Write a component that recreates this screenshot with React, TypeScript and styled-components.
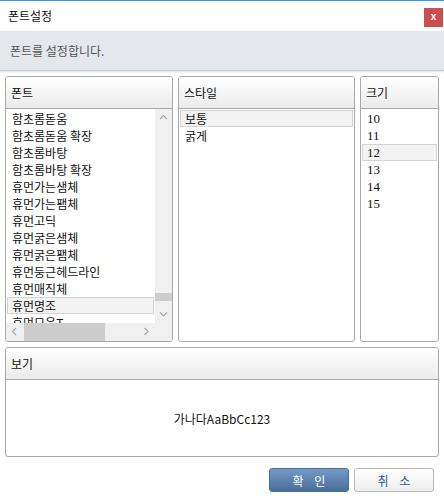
import React from "react";
import styled, { createGlobalStyle } from "styled-components";

const GlobalStyle = createGlobalStyle`
  html, body { margin: 0; padding: 0; background: #fff; }
  body {
    font-family: "Noto Sans CJK KR", "Noto Sans", sans-serif;
    font-size: 12px;
    color: #111;
  }
  * { box-sizing: border-box; }
`;

const Dialog = styled.div`
  width: 444px;
  height: 502px;
  border-top: 1px solid #3c9be8;
  background: #fff;
  display: flex;
  flex-direction: column;
  overflow: hidden;
`;

const TitleBar = styled.div`
  height: 30px;
  display: flex;
  align-items: flex-start;
  justify-content: space-between;
  padding-left: 8px;
`;

const Title = styled.div`
  margin-top: 6px;
  line-height: 18px;
  font-size: 12px;
  color: #111;
`;

const CloseButton = styled.div`
  margin-top: 7px;
  margin-right: 1px;
  width: 19px;
  height: 19px;
  background: #c9504f;
  color: #fff;
  font-family: "Liberation Sans", Arial, sans-serif;
  font-weight: bold;
  font-size: 10px;
  line-height: 18px;
  text-align: center;
`;

const Banner = styled.div`
  height: 40px;
  line-height: 39px;
  background: #e4e7ec;
  border-bottom: 1px solid #c6c8cc;
  box-shadow: 0 1px 2px rgba(0, 0, 0, 0.12);
  padding-left: 10px;
  color: #555;
  font-size: 12px;
`;

const Content = styled.div`
  padding: 5px 5px 0;
  display: flex;
  flex-direction: column;
  gap: 5px;
`;

const TopRow = styled.div`
  display: grid;
  grid-template-columns: 168px 177px 79px;
  gap: 5px;
  height: 266px;
`;

const Panel = styled.div<{ $height?: number }>`
  border: 1px solid #a9a9a9;
  border-radius: 3px;
  background: #fff;
  display: flex;
  flex-direction: column;
  overflow: hidden;
  ${(p) => (p.$height ? `height: ${p.$height}px;` : "")}
`;

const PanelHeader = styled.div`
  height: 32px;
  flex: none;
  border-bottom: 1px solid #a9a9a9;
  background: linear-gradient(#ffffff, #ebebeb);
  padding-left: 5px;
  line-height: 31px;
  font-size: 12px;
  color: #111;
`;

const ScrollFrame = styled.div`
  flex: 1;
  display: grid;
  grid-template-columns: 1fr 17px;
  grid-template-rows: 1fr 18px;
  min-height: 0;
`;

const ListBody = styled.div<{ $serif?: boolean }>`
  flex: 1;
  min-height: 0;
  overflow: hidden;
  padding-top: 1px;
  ${(p) =>
    p.$serif
      ? `font-family: "Liberation Serif", "Noto Sans CJK KR", serif; font-size: 13px;`
      : ""}
`;

const Item = styled.div<{ $selected?: boolean }>`
  height: 17px;
  line-height: 15px;
  margin: 0 1px;
  padding-left: 4px;
  white-space: nowrap;
  border: 1px solid ${(p) => (p.$selected ? "#d3d3d3" : "transparent")};
  background: ${(p) => (p.$selected ? "#f3f3f3" : "transparent")};
`;

const VScroll = styled.div`
  grid-row: 1;
  grid-column: 2;
  background: #f0f0f0;
  display: flex;
  flex-direction: column;
`;

const HScroll = styled.div`
  grid-row: 2;
  grid-column: 1;
  background: #f0f0f0;
  display: flex;
`;

const Corner = styled.div`
  grid-row: 2;
  grid-column: 2;
  background: #f0f0f0;
`;

const ArrowBox = styled.div`
  flex: none;
  width: 17px;
  height: 17px;
  display: flex;
  align-items: center;
  justify-content: center;
`;

const VTrack = styled.div`
  flex: 1;
  display: flex;
  flex-direction: column;
  align-items: center;
`;

const VThumb = styled.div<{ $offset: number }>`
  margin-top: ${(p) => p.$offset}px;
  width: 17px;
  height: 8px;
  background: #cdcdcd;
`;

const HTrack = styled.div`
  flex: 1;
  display: flex;
  align-items: center;
`;

const HThumb = styled.div<{ $offset: number; $width: number }>`
  margin-left: ${(p) => p.$offset}px;
  width: ${(p) => p.$width}px;
  height: 18px;
  background: #cdcdcd;
`;

const PreviewBody = styled.div`
  flex: 1;
  display: flex;
  align-items: center;
  justify-content: center;
  font-size: 12px;
  color: #111;
`;

const Footer = styled.div`
  display: flex;
  justify-content: flex-end;
  gap: 5px;
  padding-right: 10px;
  margin-top: 11px;
`;

const Button = styled.div<{ $primary?: boolean }>`
  width: 80px;
  height: 24px;
  border-radius: 3px;
  display: flex;
  align-items: center;
  justify-content: center;
  padding-left: 4px;
  font-size: 12px;
  letter-spacing: 4px;
  ${(p) =>
    p.$primary
      ? `background: linear-gradient(#7399c4, #4b6e9a);
         border: 1px solid #4d6c93;
         color: #fff;`
      : `background: linear-gradient(#ffffff, #eeeeee);
         border: 1px solid #b8b8b8;
         color: #2c578a;`}
`;

const Chevron = ({ dir }: { dir: "up" | "down" | "left" | "right" }) => {
  const paths: Record<string, string> = {
    up: "M1 5 L4.5 1.5 L8 5",
    down: "M1 1.5 L4.5 5 L8 1.5",
    left: "M5 1 L1.5 4.5 L5 8",
    right: "M1.5 1 L5 4.5 L1.5 8",
  };
  const vertical = dir === "up" || dir === "down";
  return (
    <svg
      width={vertical ? 9 : 7}
      height={vertical ? 7 : 9}
      viewBox={vertical ? "0 0 9 7" : "0 0 7 9"}
    >
      <path d={paths[dir]} fill="none" stroke="#a6a6a6" strokeWidth="1.2" />
    </svg>
  );
};

const fonts = [
  "함초롬돋움",
  "함초롬돋움 확장",
  "함초롬바탕",
  "함초롬바탕 확장",
  "휴먼가는샘체",
  "휴먼가는팸체",
  "휴먼고딕",
  "휴먼굵은샘체",
  "휴먼굵은팸체",
  "휴먼둥근헤드라인",
  "휴먼매직체",
  "휴먼명조",
  "휴먼모음T",
  "휴먼아미체",
];

const styles = ["보통", "굵게"];
const sizes = ["10", "11", "12", "13", "14", "15"];

export default function App() {
  return (
    <>
      <GlobalStyle />
      <Dialog>
        <TitleBar>
          <Title>폰트설정</Title>
          <CloseButton>x</CloseButton>
        </TitleBar>
        <Banner>폰트를 설정합니다.</Banner>
        <Content>
          <TopRow>
            <Panel>
              <PanelHeader>폰트</PanelHeader>
              <ScrollFrame>
                <ListBody>
                  {fonts.map((f) => (
                    <Item key={f} $selected={f === "휴먼명조"}>
                      {f}
                    </Item>
                  ))}
                </ListBody>
                <VScroll>
                  <ArrowBox>
                    <Chevron dir="up" />
                  </ArrowBox>
                  <VTrack>
                    <VThumb $offset={167} />
                  </VTrack>
                  <ArrowBox>
                    <Chevron dir="down" />
                  </ArrowBox>
                </VScroll>
                <HScroll>
                  <ArrowBox>
                    <Chevron dir="left" />
                  </ArrowBox>
                  <HTrack>
                    <HThumb $offset={1} $width={81} />
                  </HTrack>
                  <ArrowBox>
                    <Chevron dir="right" />
                  </ArrowBox>
                </HScroll>
                <Corner />
              </ScrollFrame>
            </Panel>
            <Panel>
              <PanelHeader>스타일</PanelHeader>
              <ListBody>
                {styles.map((s) => (
                  <Item key={s} $selected={s === "보통"}>
                    {s}
                  </Item>
                ))}
              </ListBody>
            </Panel>
            <Panel>
              <PanelHeader>크기</PanelHeader>
              <ListBody $serif>
                {sizes.map((s) => (
                  <Item key={s} $selected={s === "12"}>
                    {s}
                  </Item>
                ))}
              </ListBody>
            </Panel>
          </TopRow>
          <Panel $height={110}>
            <PanelHeader>보기</PanelHeader>
            <PreviewBody>가나다AaBbCc123</PreviewBody>
          </Panel>
        </Content>
        <Footer>
          <Button $primary>확 인</Button>
          <Button>취 소</Button>
        </Footer>
      </Dialog>
    </>
  );
}
